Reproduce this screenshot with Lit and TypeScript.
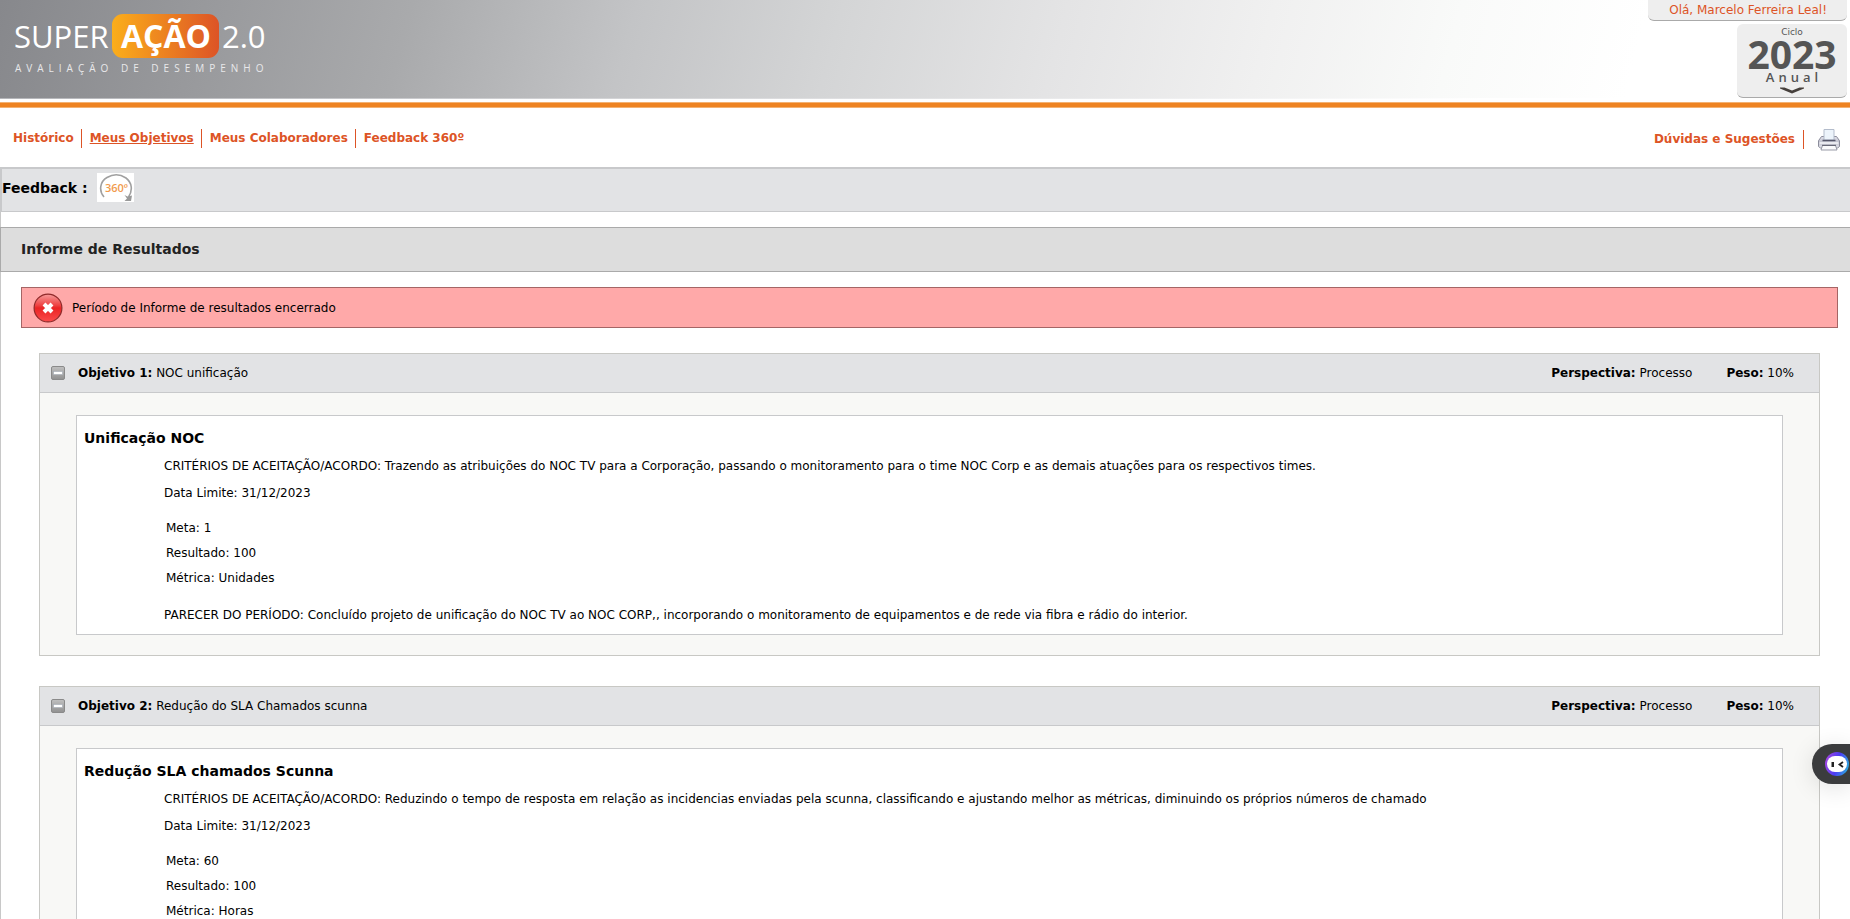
import { LitElement, html, css, svg } from "lit";
import { customElement, property, state } from "lit/decorators.js";

interface Objective {
  number: number;
  name: string;
  perspective: string;
  weight: string;
  title: string;
  criteria: string;
  deadline: string;
  goal: string;
  result: string;
  metric: string;
  opinion: string;
}

const OBJECTIVES: Objective[] = [
  {
    number: 1,
    name: "NOC unificação",
    perspective: "Processo",
    weight: "10%",
    title: "Unificação NOC",
    criteria:
      "Trazendo as atribuições do NOC TV para a Corporação, passando o monitoramento para o time NOC Corp e as demais atuações para os respectivos times.",
    deadline: "31/12/2023",
    goal: "1",
    result: "100",
    metric: "Unidades",
    opinion:
      "Concluído projeto de unificação do NOC TV ao NOC CORP,, incorporando o monitoramento de equipamentos e de rede via fibra e rádio do interior.",
  },
  {
    number: 2,
    name: "Redução do SLA Chamados scunna",
    perspective: "Processo",
    weight: "10%",
    title: "Redução SLA chamados Scunna",
    criteria:
      "Reduzindo o tempo de resposta em relação as incidencias enviadas pela scunna, classificando e ajustando melhor as métricas, diminuindo os próprios números de chamado",
    deadline: "31/12/2023",
    goal: "60",
    result: "100",
    metric: "Horas",
    opinion: "",
  },
];

@customElement("objective-card")
export class ObjectiveCard extends LitElement {
  @property({ attribute: false }) objective!: Objective;
  @state() private open = true;

  static styles = css`
    :host {
      display: block;
      border: 1px solid #c8c8c4;
      background: #f8f8f6;
    }
    .head {
      display: flex;
      align-items: center;
      height: 38px;
      padding: 0 25px 0 11px;
      background: #e2e3e5;
      border-bottom: 1px solid #c8c9cb;
    }
    .toggle {
      display: block;
      width: 14px;
      height: 14px;
      margin-right: 13px;
      padding: 0;
      border: 0;
      background: none;
      cursor: pointer;
    }
    .toggle svg {
      display: block;
    }
    .name {
      flex: 1;
      margin: 0;
      font-size: 12px;
      font-weight: normal;
    }
    .facts {
      display: flex;
      gap: 34px;
    }
    .panel {
      margin: 22px 36px 20px;
      padding: 12px 7px 5px;
      border: 1px solid #c8c9cb;
      background: #fff;
    }
    .title {
      margin: 0;
      font-size: 14px;
      line-height: 20px;
    }
    .details {
      padding: 5px 0 0 80px;
    }
    p {
      margin: 0;
      line-height: 27px;
    }
    .measures {
      margin: 9px 2px 11px;
    }
    .measures p {
      line-height: 25px;
    }
  `;

  render() {
    const o = this.objective;
    return html`
      <header class="head">
        <button
          class="toggle"
          aria-label="Expandir ou recolher objetivo ${o.number}"
          aria-expanded=${this.open}
          @click=${() => (this.open = !this.open)}
        >
          <svg width="14" height="14" viewBox="0 0 14 14">
            <defs>
              <linearGradient id="g" x2="0" y2="1">
                <stop offset="0" stop-color="#c0c0c0" />
                <stop offset="1" stop-color="#909090" />
              </linearGradient>
            </defs>
            <rect x=".5" y=".5" width="13" height="13" rx="1.5" fill="url(#g)" stroke="#8a8a8a" />
            <rect x="2.5" y="5.5" width="9" height="3" fill="#fff" stroke="#a3abb5" stroke-width=".6" />
            ${this.open ? null : svg`<path d="M7 3v8" stroke="#fff" stroke-width="2" />`}
          </svg>
        </button>
        <h2 class="name"><b>Objetivo ${o.number}:</b> ${o.name}</h2>
        <div class="facts">
          <span><b>Perspectiva:</b> ${o.perspective}</span>
          <span><b>Peso:</b> ${o.weight}</span>
        </div>
      </header>
      ${this.open
        ? html`<section class="panel">
            <h3 class="title">${o.title}</h3>
            <div class="details">
              <p>CRITÉRIOS DE ACEITAÇÃO/ACORDO: ${o.criteria}</p>
              <p>Data Limite: ${o.deadline}</p>
              <div class="measures">
                <p>Meta: ${o.goal}</p>
                <p>Resultado: ${o.result}</p>
                <p>Métrica: ${o.metric}</p>
              </div>
              ${o.opinion ? html`<p>PARECER DO PERÍODO: ${o.opinion}</p>` : null}
            </div>
          </section>`
        : null}
    `;
  }
}

@customElement("app-root")
export class AppRoot extends LitElement {
  static styles = css`
    :host {
      display: block;
      position: relative;
      height: 100vh;
      overflow: hidden;
      background: #fff;
      color: #000;
      font: 12px Verdana, "DejaVu Sans", sans-serif;
    }
    a {
      color: #dd5426;
      text-decoration: none;
    }
    .banner {
      display: flex;
      justify-content: space-between;
      height: 98px;
      border-bottom: 1px solid #c4c5c9;
      border-image: linear-gradient(90deg, #b4b5b9, #fff 80%) 1;
      background: linear-gradient(
        105deg,
        #87888c 0%,
        #a9aaac 22%,
        #c3c4c6 34%,
        #d4d5d6 45%,
        #e4e4e5 57%,
        #f0f0f0 68%,
        #f9faf9 78%,
        #fff 88%
      );
    }
    .logo {
      display: block;
      margin: 12px 0 0 14px;
    }
    .account {
      display: flex;
      flex-direction: column;
      align-items: flex-end;
      gap: 3px;
      padding-right: 3px;
    }
    .tab {
      border-bottom: 1px solid #aaa;
      border-radius: 0 0 6px 6px;
      background: #eee;
    }
    .greeting {
      height: 20px;
      padding: 0 20px 0 21px;
      color: #dd5426;
      line-height: 20px;
    }
    .cycle {
      display: flex;
      flex-direction: column;
      align-items: center;
      box-sizing: border-box;
      width: 110px;
      height: 74px;
      padding: 3px 0 0;
      border: 0 solid #aaa;
      border-bottom-width: 1px;
      border-radius: 6px;
      color: #555;
      font-family: "Open Sans", sans-serif;
      cursor: pointer;
    }
    .cycle-label {
      font: 9px/10px Verdana, "DejaVu Sans", sans-serif;
    }
    .cycle-year {
      font-size: 39px;
      font-weight: bold;
      line-height: 34px;
    }
    .cycle-kind {
      padding-left: 4px;
      font-size: 13px;
      font-weight: 600;
      line-height: 12px;
      letter-spacing: 4px;
    }
    .chevron {
      margin-top: 4px;
    }
    .rule {
      height: 4px;
      margin-top: 3px;
      border: solid #f3b274;
      border-width: 1px 0;
      background: #ee8322;
    }
    .nav {
      display: flex;
      align-items: center;
      justify-content: space-between;
      height: 59px;
      padding: 0 9px 0 13px;
      font-weight: bold;
    }
    .links {
      display: flex;
      align-items: center;
      padding-top: 1px;
    }
    .links a {
      line-height: 19px;
    }
    .links a + a {
      margin-left: 7px;
      padding-left: 8px;
      border-left: 1px solid #dd5426;
    }
    .links .current span {
      text-decoration: underline;
    }
    .tools {
      display: flex;
      align-items: center;
      padding-top: 4px;
    }
    .help {
      padding-right: 8px;
      border-right: 1px solid #dd5426;
      line-height: 19px;
    }
    .print {
      margin-left: 13px;
      padding: 0;
      border: 0;
      background: none;
      cursor: pointer;
    }
    .print svg,
    .feedback svg,
    .alert svg,
    .assistant svg {
      display: block;
    }
    .feedback {
      display: flex;
      align-items: flex-start;
      height: 38px;
      padding-top: 4px;
      border: solid #c8c9cb;
      border-width: 2px 0 1px 2px;
      background: #e2e3e5;
      font-size: 14px;
      font-weight: bold;
      line-height: 30px;
      gap: 9px;
    }
    .content {
      border-left: 1px solid #c8c8c8;
      padding-top: 15px;
    }
    .heading {
      margin: 0 0 15px -1px;
      padding: 0 20px;
      border: 1px solid #aaa;
      border-right: 0;
      background: #ddd;
      color: #222;
      font-size: 14px;
      line-height: 43px;
    }
    .alert {
      display: flex;
      align-items: center;
      gap: 9px;
      height: 39px;
      margin: 0 12px 25px 20px;
      padding-left: 11px;
      border: 1px solid #a56565;
      background: #ffa9a9;
    }
    .list {
      display: flex;
      flex-direction: column;
      gap: 30px;
      margin: 0 30px 0 38px;
    }
    .assistant {
      position: absolute;
      right: 0;
      top: 744px;
      display: flex;
      align-items: center;
      height: 40px;
      padding: 0 1px 0 13px;
      border: 0;
      border-radius: 20px 0 0 20px;
      background: #3b3c3e;
      box-shadow: 0 4px 24px rgba(0, 0, 0, 0.12);
      cursor: pointer;
    }
  `;

  private logo() {
    return html`<svg class="logo" width="254" height="64" viewBox="0 0 254 64" role="img" aria-label="SuperAção 2.0">
      <defs>
        <linearGradient id="o">
          <stop offset="0" stop-color="#fbae1b" />
          <stop offset="1" stop-color="#dd5426" />
        </linearGradient>
      </defs>
      <rect x="98" y="2" width="107" height="44" rx="11" fill="url(#o)" />
      <g fill="#fff" font-family="Open Sans, sans-serif">
        <text x="0" y="36" font-size="31">SUPER</text>
        <text x="107" y="36" font-size="32" font-weight="bold">AÇÃO</text>
        <text x="208" y="36" font-size="31">2.0</text>
        <text x="1" y="60" font-size="10" letter-spacing="5" fill="#e8e8ea">AVALIAÇÃO DE DESEMPENHO</text>
      </g>
    </svg>`;
  }

  render() {
    return html`
      <header class="banner">
        ${this.logo()}
        <div class="account">
          <div class="tab greeting">Olá, Marcelo Ferreira Leal!</div>
          <button class="tab cycle">
            <span class="cycle-label">Ciclo</span>
            <span class="cycle-year">2023</span>
            <span class="cycle-kind">Anual</span>
            <svg class="chevron" width="24" height="7" viewBox="0 0 24 7">
              <path d="M0 .5h4.500L12 3.500 19.500.5H24v1L12 6.500 0 1.500z" fill="#46403c" />
            </svg>
          </button>
        </div>
      </header>
      <div class="rule"></div>
      <nav class="nav">
        <div class="links">
          <a href="#historico">Histórico</a>
          <a href="#objetivos" class="current"><span>Meus Objetivos</span></a>
          <a href="#colaboradores">Meus Colaboradores</a>
          <a href="#feedback">Feedback 360º</a>
        </div>
        <div class="tools">
          <a class="help" href="#duvidas">Dúvidas e Sugestões</a>
          <button class="print" aria-label="Imprimir">
            <svg width="24" height="24" viewBox="0 0 24 24">
              <defs>
                <linearGradient id="p" x2="0" y2="1">
                  <stop offset="0" stop-color="#e4e4ec" />
                  <stop offset=".5" stop-color="#bfc0cd" />
                  <stop offset="1" stop-color="#e6e6ee" />
                </linearGradient>
              </defs>
              <path d="M4.500 8.500h15l2.500 3.500.5 1v5.500l-2 1.500h-17l-2-1.500V13l.5-1z" fill="url(#p)" stroke="#8b8c9b" />
              <path d="M7 1.500h10v10.500H7z" fill="#edf4fb" stroke="#b3bccb" />
              <path d="M5.500 12.500h13" stroke="#55566a" stroke-width="1.500" />
              <path d="M2.500 15h19" stroke="#f6f6fa" stroke-width="1.500" />
              <path d="M5.500 17.500h13l1.500 4.500H4z" fill="#fafafc" stroke="#9a9ba8" />
              <path d="M5 17.300h14" stroke="#5c5d6c" />
            </svg>
          </button>
        </div>
      </nav>
      <div class="feedback">
        <span>Feedback :</span>
        <a href="#feedback" aria-label="Feedback 360º">
          <svg width="37" height="29" viewBox="0 0 37 29">
            <path fill="#fff" d="M0 0h37v29H0z" />
            <path d="M7 24C1.500 17.500 3 8.500 10 4.500c6-3.500 13-3.500 19 .5 6 4.500 7 12.500 2.500 19" fill="none" stroke="#a0a0a0" stroke-width="1.600" />
            <path d="M27.500 22l3 1.500 4.500-1-1 5.500h-6.500l2.500-2.500z" fill="#999" />
            <text x="8" y="19" font-family="Open Sans, sans-serif" font-size="11" font-weight="600" fill="#f19a4c">360º</text>
          </svg>
        </a>
      </div>
      <main class="content">
        <h1 class="heading">Informe de Resultados</h1>
        <div class="alert" role="alert">
          <svg width="30" height="30" viewBox="0 0 30 30">
            <defs>
              <linearGradient id="r" x2="0" y2="1">
                <stop offset="0" stop-color="#f79a9a" />
                <stop offset=".4" stop-color="#ee4444" />
                <stop offset=".5" stop-color="#ea2424" />
                <stop offset="1" stop-color="#fb4c4c" />
              </linearGradient>
            </defs>
            <circle cx="15" cy="15" r="13.9" fill="url(#r)" stroke="#8f2a2a" stroke-width="1.200" />
            <path d="M11 11l8 8M19 11l-8 8" stroke="#fff" stroke-width="4" />
          </svg>
          <span>Período de Informe de resultados encerrado</span>
        </div>
        <div class="list">
          ${OBJECTIVES.map((o) => html`<objective-card .objective=${o}></objective-card>`)}
        </div>
      </main>
      <button class="assistant" aria-label="Assistente">
        <svg width="24" height="24" viewBox="0 0 24 24">
          <defs>
            <linearGradient id="a" x1="0" y1=".4" x2="1" y2=".7">
              <stop offset="0" stop-color="#a044e0" />
              <stop offset=".5" stop-color="#4a3cf5" />
              <stop offset="1" stop-color="#2aaede" />
            </linearGradient>
          </defs>
          <circle cx="12" cy="12" r="12" fill="url(#a)" />
          <rect x="2" y="4" width="20" height="16" rx="8" fill="#fff" />
          <path d="M6.500 10h2.500v5H6.500z" fill="#222" />
          <path d="M18 10l-3.500 2.500L18 15" fill="none" stroke="#222" stroke-width="1.800" />
        </svg>
      </button>
    `;
  }
}
